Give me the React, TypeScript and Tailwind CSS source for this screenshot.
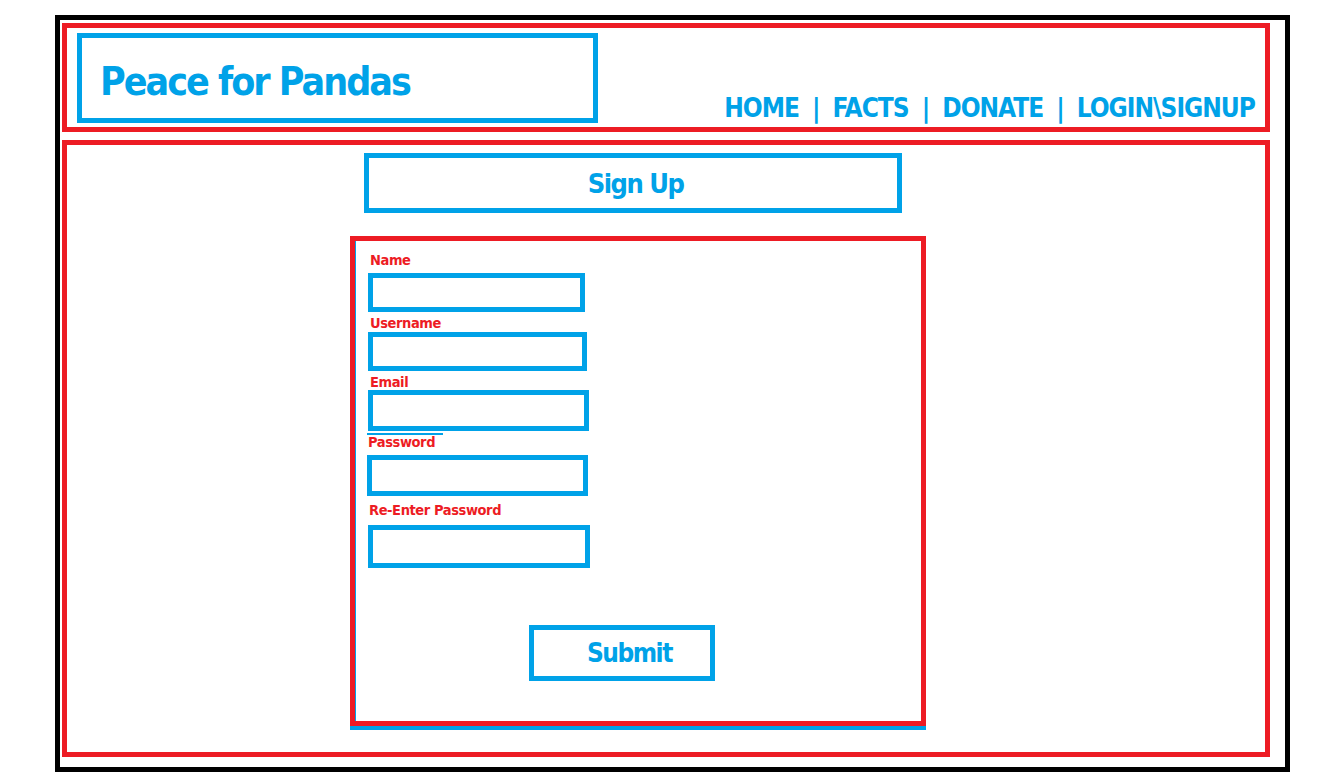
import React from 'react';

const BLUE = 'border-[#00a2e8]';
const font = { fontFamily: '"Liberation Sans Narrow", "DejaVu Sans Condensed", "Liberation Sans", sans-serif' };
const labelText = 'block text-[14.5px] tracking-[-0.4px] leading-none font-bold text-[#ed1c24]';

const fields = [
  { label: 'Name', labelClass: 'mt-[12px]', inputClass: 'mt-[5px] w-[217px] h-[39px]' },
  { label: 'Username', labelClass: 'mt-[4px]', inputClass: 'mt-[2px] w-[219px] h-[39px]' },
  { label: 'Email', labelClass: 'mt-[4px]', inputClass: 'mt-[0.5px] w-[221px] h-[41px]' },
];

const links = ['HOME', 'FACTS', 'DONATE', 'LOGIN\\SIGNUP'];

export default function App() {
  return (
    <div className="min-h-screen bg-white pl-[55px] pt-[15px]" style={font}>
      <div className="w-[1235px] h-[757px] border-[5px] border-black pl-[2px] pt-[3px]">
        {/* Header */}
        <header className="flex w-[1208px] h-[109px] border-[5px] border-[#ed1c24] pl-[10px] pt-[5px] pr-[10px]">
          <div className={`w-[521px] h-[90px] border-[5px] ${BLUE} pl-[18px] pt-[24px]`}>
            <h1 className="text-[39px] tracking-[-2px] leading-none font-bold text-[#00a2e8]">Peace for Pandas</h1>
          </div>
          <nav className="ml-auto mt-[62px] flex gap-[13px] text-[26px] tracking-[-1px] leading-none font-bold text-[#00a2e8]">
            {links.map((l, i) => (
              <React.Fragment key={l}>
                {i > 0 && <span>|</span>}
                <a href="#">{l}</a>
              </React.Fragment>
            ))}
          </nav>
        </header>

        {/* Main */}
        <main className="mt-[8px] w-[1208px] h-[617px] border-[5px] border-[#ed1c24] pl-[297px] pt-[8px]">
          <div className={`flex items-center justify-center w-[538px] h-[60px] border-[5px] ${BLUE} pl-[5px]`}>
            <h2 className="text-[27px] tracking-[-1.5px] leading-none font-bold text-[#00a2e8]">Sign Up</h2>
          </div>

          <form className="-ml-[14px] mt-[23px] w-[576px] h-[490px] border-[5px] border-[#ed1c24] pl-[13px] shadow-[0_4px_0_#00a2e8,inset_1px_0_0_#00a2e8]">
            {fields.map((f) => (
              <div key={f.label}>
                <label className={`${labelText} ml-[2px] ${f.labelClass}`}>{f.label}</label>
                <div className={`border-[5px] ${BLUE} ${f.inputClass}`} />
              </div>
            ))}
            <div className="mt-[2px] -ml-[1px] w-[76px] h-[2px] bg-[#00a2e8]" />
            <label className={`${labelText} mt-0`}>Password</label>
            <div className={`mt-[5.5px] -ml-[1px] w-[221px] h-[41px] border-[5px] ${BLUE}`} />
            <label className={`${labelText} mt-[7px] ml-[1px]`}>Re-Enter Password</label>
            <div className={`mt-[7.5px] w-[222px] h-[43px] border-[5px] ${BLUE}`} />
            <div className="ml-[161px] mt-[57px]">
              <button
                type="button"
                className={`flex items-center w-[186px] h-[56px] border-[5px] ${BLUE} pl-[53px] text-[26px] tracking-[-1.5px] leading-none font-bold text-[#00a2e8]`}
              >
                Submit
              </button>
            </div>
          </form>
        </main>
      </div>
    </div>
  );
}
